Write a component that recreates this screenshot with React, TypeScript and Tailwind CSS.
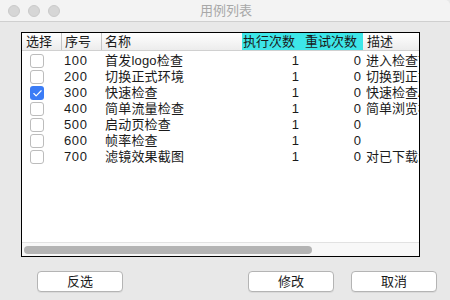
import { Check } from 'lucide-react';

type Row = { id: number; name: string; runs: number; retries: number; desc: string; checked?: boolean };

const rows: Row[] = [
    { id: 100, name: '首发logo检查', runs: 1, retries: 0, desc: '进入检查首发logo是否正确显示' },
    { id: 200, name: '切换正式环境', runs: 1, retries: 0, desc: '切换到正式环境并重启应用' },
    { id: 300, name: '快速检查', runs: 1, retries: 0, desc: '快速检查App主要功能', checked: true },
    { id: 400, name: '简单流量检查', runs: 1, retries: 0, desc: '简单浏览检查流量消耗' },
    { id: 500, name: '启动页检查', runs: 1, retries: 0, desc: '' },
    { id: 600, name: '帧率检查', runs: 1, retries: 0, desc: '' },
    { id: 700, name: '滤镜效果截图', runs: 1, retries: 0, desc: '对已下载滤镜效果截图' },
];

const font = { fontFamily: '"Liberation Sans", "Noto Sans CJK SC", sans-serif' };

function Btn({ label, className }: { label: string; className: string }) {
    return (
        <button
            className={`h-[21px] rounded-[4px] border border-[#b4b4b4] bg-white text-[13px] leading-none text-[#1a1a1a] shadow-[0_1px_0_rgba(0,0,0,0.06)] ${className}`}
        >
            {label}
        </button>
    );
}

export default function App() {
    return (
        <div className="relative w-[450px] h-[300px] overflow-hidden bg-[#e8e8e8] flex flex-col" style={font}>
            {/* title bar */}
            <div className="relative h-[22px] shrink-0 bg-[#f3f3f3] border-b border-[#cfcfcf] rounded-tr-[5px] flex items-center">
                <div className="flex items-center gap-[8px] pl-[8px]">
                    <span className="w-[12px] h-[12px] rounded-full bg-[#d6d6d6] border border-[#cacaca]" />
                    <span className="w-[12px] h-[12px] rounded-full bg-[#d6d6d6] border border-[#cacaca]" />
                    <span className="w-[12px] h-[12px] rounded-full bg-[#d6d6d6] border border-[#cacaca]" />
                </div>
                <div className="absolute inset-0 flex items-center justify-center text-[13px] text-[#a8a8a8] pl-[2px]">用例列表</div>
            </div>

            {/* table frame */}
            <div className="ml-[21px] mt-[10px] w-[399px] h-[225px] border border-black bg-white flex flex-col overflow-hidden">
                <div className="h-[18px] shrink-0 flex text-[13px] leading-[17px] text-[#1a1a1a] bg-gradient-to-b from-white to-[#ececec] border-b border-[#d0d0d0] whitespace-nowrap">
                    <div className="w-[40px] shrink-0 pl-[4px] border-r border-[#c4c4c4]">选择</div>
                    <div className="w-[40px] shrink-0 pl-[3px] border-r border-[#c4c4c4]">序号</div>
                    <div className="w-[140px] shrink-0 pl-[3px]">名称</div>
                    <div className="w-[60px] shrink-0 pl-[1px] bg-[#3de6e8]">执行次数</div>
                    <div className="w-[61px] shrink-0 pl-[3px] bg-[#3de6e8]">重试次数</div>
                    <div className="w-[200px] shrink-0 pl-[4px]">描述</div>
                </div>

                <div className="flex-1 pt-[2px]">
                    {rows.map(r => (
                        <div key={r.id} className="h-[16px] flex items-center text-[13px] leading-[16px] text-[#1a1a1a] whitespace-nowrap">
                            <div className="w-[40px] shrink-0 flex pl-[8px]">
                                {r.checked ? (
                                    <span className="w-[14px] h-[14px] rounded-[3px] bg-[#3b7cf6] flex items-center justify-center">
                                        <Check className="w-[11px] h-[11px] text-white" strokeWidth={2.5} />
                                    </span>
                                ) : (
                                    <span className="w-[14px] h-[14px] rounded-[3px] border border-[#bcbcbc] bg-white" />
                                )}
                            </div>
                            <div className="w-[40px] shrink-0 pl-[2px] tracking-[0.6px]">{r.id}</div>
                            <div className="w-[140px] shrink-0 pl-[3px] tracking-[0.2px]">{r.name}</div>
                            <div className="w-[60px] shrink-0 text-right pr-[3px]">{r.runs}</div>
                            <div className="w-[61px] shrink-0 text-right pr-[2px]">{r.retries}</div>
                            <div className="w-[200px] shrink-0 pl-[3px] overflow-hidden">{r.desc}</div>
                        </div>
                    ))}
                </div>

                {/* horizontal scrollbar */}
                <div className="h-[14px] shrink-0 bg-[#f8f8f8] border-t border-[#e2e2e2] flex items-center pl-[2px]">
                    <div className="w-[288px] h-[8px] rounded-full bg-[#b4b4b4]" />
                </div>
            </div>

            {/* buttons */}
            <div className="flex items-center mt-[14px]">
                <Btn label="反选" className="ml-[37px] w-[86px]" />
                <Btn label="修改" className="ml-[125px] w-[86px]" />
                <Btn label="取消" className="ml-[17px] w-[86px]" />
            </div>
        </div>
    );
}
